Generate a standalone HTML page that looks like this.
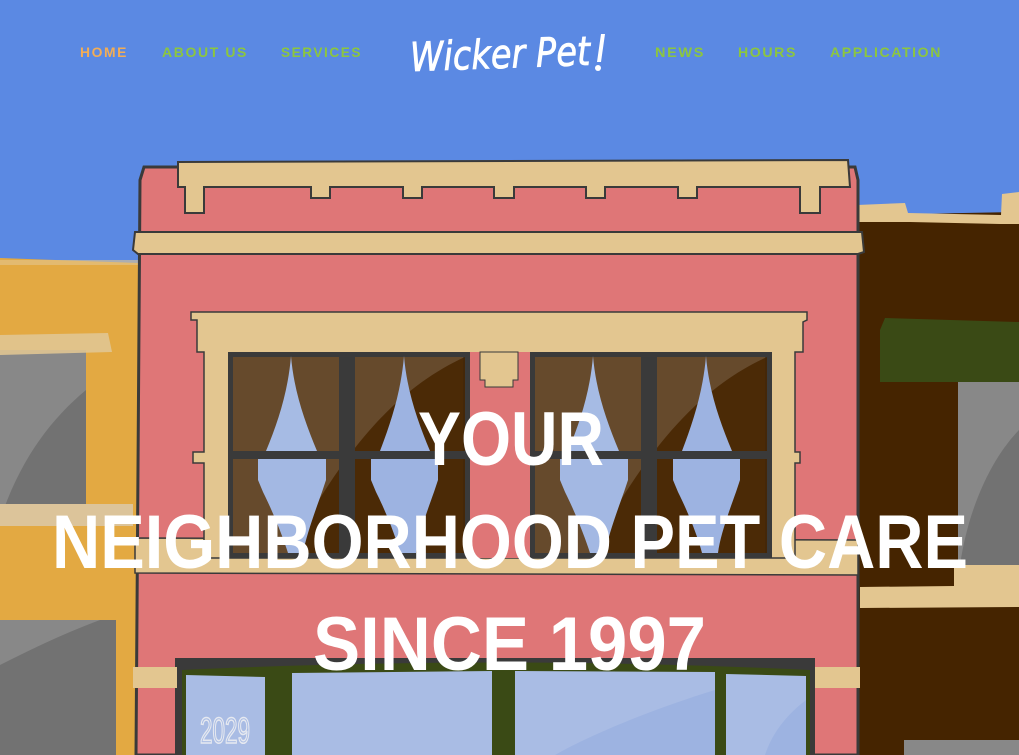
<!DOCTYPE html>
<html><head><meta charset="utf-8"><style>
html,body{margin:0;padding:0;width:1019px;height:755px;overflow:hidden;background:#5B89E3}
svg{display:block}
</style></head><body>
<svg width="1019" height="755" viewBox="0 0 1019 755" xmlns="http://www.w3.org/2000/svg">
<defs>
<g id="win">
  <rect x="0" y="0" width="242" height="206" fill="#3A3A3A"/>
  <rect x="5" y="5" width="106" height="94" fill="#664A2C"/>
  <rect x="127" y="5" width="108" height="94" fill="#664A2C"/>
  <rect x="5" y="107" width="106" height="94" fill="#664A2C"/>
  <rect x="127" y="107" width="108" height="94" fill="#664A2C"/>
  <path d="M237 5 C160 40 110 110 60 201 L237 201 Z" fill="#462400" opacity="0.85"/>
  <rect x="111" y="0" width="16" height="206" fill="#3A3A3A"/>
  <rect x="0" y="99" width="242" height="8" fill="#3A3A3A"/>
  <path d="M63 4 C60 40 50 70 38 99 L89 99 C77 70 66 40 63 4Z" fill="#A6BBE4"/>
  <path d="M176 4 C173 40 163 70 152 99 L202 99 C190 70 179 40 176 4Z" fill="#9DB3E1"/>
  <path d="M30 107 L98 107 L98 128 L94 140 C85 165 78 185 75 201 L60 201 C55 185 45 160 35 140 L30 128Z" fill="#A3B8E3"/>
  <path d="M143 107 L210 107 L210 128 L206 140 C197 165 190 185 188 201 L172 201 C168 185 158 160 148 140 L143 128Z" fill="#9DB3E1"/>
</g>
</defs>
<rect width="1019" height="755" fill="#5B89E3"/>
<!-- yellow building left -->
<path d="M0 258 L138 263 L138 755 L0 755Z" fill="#E3A942"/>
<rect x="0" y="260" width="138" height="5" fill="#E3C690" opacity="0.6"/>
<rect x="0" y="350" width="86" height="155" fill="#888"/>
<path d="M86 390 C50 420 20 460 0 520 L0 505 L86 505Z" fill="#727272"/>
<path d="M0 335 L108 333 L112 352 L0 355Z" fill="#E0C592" opacity="0.9"/>
<rect x="0" y="504" width="133" height="22" fill="#DCC49A"/>
<rect x="0" y="620" width="116" height="135" fill="#727272"/>
<path d="M0 620 L100 620 C60 635 30 650 0 665Z" fill="#888"/>
<!-- right brown building -->
<path d="M857 215 L1019 212 L1019 755 L857 755Z" fill="#452400"/>
<path d="M857 205 L905 203 L908 213 L1001 215 L1002 194 L1019 192 L1019 224 L1000 224 L910 222 L857 222Z" fill="#E3C690"/>
<path d="M885 318 L1019 322 L1019 382 L880 382 L880 330Z" fill="#3A4A15"/>
<rect x="958" y="382" width="61" height="183" fill="#888"/>
<path d="M1019 430 C990 460 968 510 960 565 L1019 565Z" fill="#727272"/>
<path d="M860 587 L954 586 L954 565 L1019 565 L1019 607 L860 608Z" fill="#E3C690"/>
<rect x="904" y="740" width="115" height="15" fill="#888"/>
<!-- pink building -->
<path d="M144 167 L855 167 L858 180 L858 755 L136 755 L140 180Z" fill="#DF7677" stroke="#3A3A3A" stroke-width="3"/>
<!-- cornice -->
<path d="M178 162 L848 160 L850 187 L820 187 L820 213 L800 213 L800 187 L697 187 L697 198 L678 198 L678 187 L605 187 L605 198 L586 198 L586 187 L514 187 L514 198 L494 198 L494 187 L422 187 L422 198 L403 198 L403 187 L330 187 L330 198 L311 198 L311 187 L204 187 L204 213 L185 213 L185 187 L178 187Z" fill="#E3C690" stroke="#3A3A3A" stroke-width="2"/>
<path d="M135 232 L862 232 L864 252 L858 254 L138 254 L133 250Z" fill="#E3C690" stroke="#3A3A3A" stroke-width="2"/>
<!-- sill band -->
<path d="M135 538 L858 540 L858 575 L135 573Z" fill="#E3C690" stroke="#3A3A3A" stroke-width="1.5"/>
<!-- window surround -->
<path d="M191 312 L807 312 L807 320 L803 322 L803 352 L795 352 L795 452 L800 452 L800 463 L795 463 L795 558 L204 558 L204 463 L193 463 L193 452 L204 452 L204 352 L197 352 L197 320 L191 320Z" fill="#E3C690" stroke="#3A3A3A" stroke-width="1.5"/>
<use href="#win" x="228" y="352"/>
<use href="#win" x="530" y="352"/>
<path d="M470 352 L530 352 L530 558 L470 558Z" fill="#DF7677"/>
<path d="M480 352 L518 352 L518 380 L513 380 L513 387 L485 387 L485 380 L480 380Z" fill="#E3C690" stroke="#3A3A3A" stroke-width="1"/>
<!-- storefront -->
<rect x="175" y="658" width="640" height="97" fill="#3A3A3A"/>
<path d="M182 670 C400 660 600 660 810 670 L810 755 L182 755Z" fill="#3A4A15"/>
<rect x="133" y="667" width="44" height="21" fill="#E3C690"/>
<rect x="815" y="667" width="45" height="21" fill="#E3C690"/>
<path d="M186 675 L265 677 L265 755 L186 755Z" fill="#A9BCE4"/>
<path d="M292 673 L492 671 L492 755 L292 755Z" fill="#A9BCE4"/>
<path d="M515 671 L715 672 L715 755 L515 755Z" fill="#A9BCE4"/>
<path d="M715 690 C650 710 590 735 555 755 L715 755Z" fill="#9DB3E1"/>
<path d="M726 674 L806 676 L806 755 L726 755Z" fill="#A9BCE4"/>
<path d="M806 700 C780 720 770 740 765 755 L806 755Z" fill="#9DB3E1"/>
<text x="200" y="743" font-family="Liberation Sans Narrow, Liberation Sans, sans-serif" font-size="36" fill="none" stroke="#E6E9F0" stroke-width="1.6" textLength="50" lengthAdjust="spacingAndGlyphs">2029</text>
<!-- hero text -->
<g font-family="Liberation Sans, sans-serif" font-weight="bold" font-size="76" fill="#fff" text-anchor="start">
  <text x="418" y="465" textLength="186" lengthAdjust="spacingAndGlyphs">YOUR</text>
  <text x="52" y="568" textLength="916" lengthAdjust="spacingAndGlyphs">NEIGHBORHOOD PET CARE</text>
  <text x="313" y="670" textLength="393" lengthAdjust="spacingAndGlyphs">SINCE 1997</text>
</g>
<!-- nav -->
<g font-family="Liberation Sans, sans-serif" font-weight="bold" font-size="14" letter-spacing="1.6">
  <text x="80" y="57" fill="#F3AD55" textLength="48" lengthAdjust="spacingAndGlyphs">HOME</text>
  <text x="162" y="57" fill="#8CC63F" textLength="86" lengthAdjust="spacingAndGlyphs">ABOUT US</text>
  <text x="281" y="57" fill="#8CC63F" textLength="81" lengthAdjust="spacingAndGlyphs">SERVICES</text>
  <text x="655" y="57" fill="#8CC63F" textLength="50" lengthAdjust="spacingAndGlyphs">NEWS</text>
  <text x="738" y="57" fill="#8CC63F" textLength="59" lengthAdjust="spacingAndGlyphs">HOURS</text>
  <text x="830" y="57" fill="#8CC63F" textLength="112" lengthAdjust="spacingAndGlyphs">APPLICATION</text>
</g>
<!-- logo -->
<text x="410" y="68" font-family="DejaVu Sans, sans-serif" font-style="italic" font-size="40" fill="#fff" stroke="#fff" stroke-width="0.8" textLength="180" lengthAdjust="spacingAndGlyphs" transform="rotate(-2 500 50)">Wicker Pet</text>
<path d="M601 34 L605 34 L601 62 L597 62Z" fill="#fff"/>
<circle cx="598" cy="68" r="3" fill="#fff"/>
</svg>
</body></html>
